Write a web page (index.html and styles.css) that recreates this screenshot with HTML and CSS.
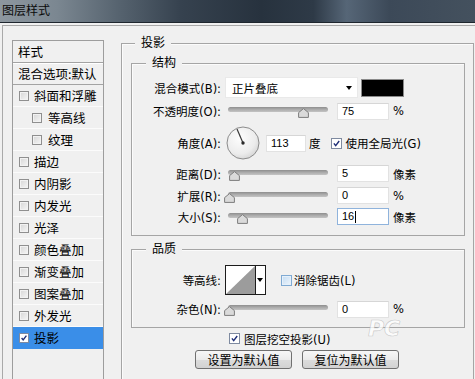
FILE: index.html
```html
<!DOCTYPE html>
<html lang="zh-CN">
<head>
<meta charset="utf-8">
<title>图层样式</title>
<link rel="stylesheet" href="styles.css">
</head>
<body>
<div class="titlebar">图层样式</div>
<div class="window">
  <div class="stylelist">
    <div class="item head">样式</div>
    <div class="item head blend">混合选项:默认</div>
    <div class="item"><span class="cb"></span><span>斜面和浮雕</span></div>
    <div class="item sub"><span class="cb"></span><span>等高线</span></div>
    <div class="item sub"><span class="cb"></span><span>纹理</span></div>
    <div class="item"><span class="cb"></span><span>描边</span></div>
    <div class="item"><span class="cb"></span><span>内阴影</span></div>
    <div class="item"><span class="cb"></span><span>内发光</span></div>
    <div class="item"><span class="cb"></span><span>光泽</span></div>
    <div class="item"><span class="cb"></span><span>颜色叠加</span></div>
    <div class="item"><span class="cb"></span><span>渐变叠加</span></div>
    <div class="item"><span class="cb"></span><span>图案叠加</span></div>
    <div class="item"><span class="cb"></span><span>外发光</span></div>
    <div class="item sel"><span class="cb on"><svg viewBox="0 0 10 10"><path d="M2 5 L4 7.5 L8 2" /></svg></span><span>投影</span></div>
  </div>

  <div class="group outer">
    <div class="legend">投影</div>

    <div class="group inner struct">
      <div class="legend inl">结构</div>

      <div class="row r1">
        <span class="lbl">混合模式(B):</span>
        <div class="select"><span>正片叠底</span><span class="arrow"></span></div>
        <span class="swatch"></span>
      </div>

      <div class="row r2">
        <span class="lbl">不透明度(O):</span>
        <div class="slider"><span class="track"></span><span class="thumb" style="left:70px"><svg viewBox="0 0 11 10"><path d="M5.5 0.6 L10.4 4.6 L10.4 9.4 L0.6 9.4 L0.6 4.6 Z"/></svg></span></div>
        <span class="num">75</span>
        <span class="unit">%</span>
      </div>

      <div class="row r3">
        <span class="lbl">角度(A):</span>
        <svg class="dial" viewBox="0 0 34 34">
          <defs>
            <radialGradient id="dg" cx="0.4" cy="0.35" r="0.7">
              <stop offset="0" stop-color="#fdfdfd"/>
              <stop offset="0.7" stop-color="#ececec"/>
              <stop offset="1" stop-color="#d4d4d4"/>
            </radialGradient>
          </defs>
          <circle cx="17" cy="17" r="16" fill="url(#dg)" stroke="#8c8c8c" stroke-width="1"/>
          <line x1="17" y1="17" x2="11" y2="3" stroke="#3a3a3a" stroke-width="1.2"/>
          <circle cx="17" cy="17" r="1.7" fill="#2a2a2a"/>
        </svg>
        <span class="num w40">113</span>
        <span class="deg">度</span>
        <span class="cb big on"><svg viewBox="0 0 11 11"><path d="M2.3 5.4 L4.5 8.2 L8.8 2.4" /></svg></span>
        <span class="cbtext">使用全局光(G)</span>
      </div>

      <div class="row r4">
        <span class="lbl">距离(D):</span>
        <div class="slider"><span class="track"></span><span class="thumb" style="left:1px"><svg viewBox="0 0 11 10"><path d="M5.5 0.6 L10.4 4.6 L10.4 9.4 L0.6 9.4 L0.6 4.6 Z"/></svg></span></div>
        <span class="num">5</span>
        <span class="unit">像素</span>
      </div>

      <div class="row r5">
        <span class="lbl">扩展(R):</span>
        <div class="slider"><span class="track"></span><span class="thumb" style="left:-4px"><svg viewBox="0 0 11 10"><path d="M5.5 0.6 L10.4 4.6 L10.4 9.4 L0.6 9.4 L0.6 4.6 Z"/></svg></span></div>
        <span class="num">0</span>
        <span class="unit">%</span>
      </div>

      <div class="row r6">
        <span class="lbl">大小(S):</span>
        <div class="slider"><span class="track"></span><span class="thumb" style="left:9px"><svg viewBox="0 0 11 10"><path d="M5.5 0.6 L10.4 4.6 L10.4 9.4 L0.6 9.4 L0.6 4.6 Z"/></svg></span></div>
        <span class="num focus">16<span class="caret"></span></span>
        <span class="unit">像素</span>
      </div>
    </div>

    <div class="group inner quality">
      <div class="legend inl">品质</div>

      <div class="row q1">
        <span class="lbl">等高线:</span>
        <div class="contour">
          <svg class="curve" viewBox="0 0 30 28" preserveAspectRatio="none"><polygon points="0,28 30,0 30,28" fill="#9c9c9c"/></svg>
          <span class="carrow"></span>
        </div>
        <span class="cb big hover"></span>
        <span class="cbtext2">消除锯齿(L)</span>
      </div>

      <div class="row q2">
        <span class="lbl">杂色(N):</span>
        <div class="slider"><span class="track"></span><span class="thumb" style="left:-4px"><svg viewBox="0 0 11 10"><path d="M5.5 0.6 L10.4 4.6 L10.4 9.4 L0.6 9.4 L0.6 4.6 Z"/></svg></span></div>
        <span class="num">0</span>
        <span class="unit">%</span>
      </div>
    </div>

    <div class="knockout">
      <span class="cb big on"><svg viewBox="0 0 11 11"><path d="M2.3 5.4 L4.5 8.2 L8.8 2.4" /></svg></span>
      <span class="cbtext">图层挖空投影(U)</span>
    </div>

    <div class="buttons">
      <button class="btn" type="button">设置为默认值</button>
      <button class="btn" type="button">复位为默认值</button>
    </div>
  </div>
</div>
<div class="watermark">PC</div>
</body>
</html>
```

FILE: styles.css
```css
* { box-sizing: border-box; }
html, body { margin: 0; padding: 0; }
body {
  width: 475px;
  height: 379px;
  overflow: hidden;
  position: relative;
  background: #f0f0f0;
  color: #000;
  font-family: "DejaVu Sans", "Noto Sans CJK SC", sans-serif;
  font-size: 11.5px;
}

.titlebar {
  height: 23px;
  padding-left: 2px;
  line-height: 20px;
  font-size: 12px;
  font-family: "Noto Sans CJK SC", sans-serif;
  color: #0a0a0a;
  background: linear-gradient(90deg, #8d979f 0%, #7b8791 12%, #56636f 25%, #36424f 38%, #27323e 55%, #2e3a47 66%, #566677 73%, #3c4958 82%, #44515e 100%);
  border-bottom: 1px solid #1e262e;
}

.window {
  display: flex;
  align-items: flex-start;
  height: 354px;
  margin: 2px 0 0 2px;
  border-top: 1px solid #a9a9a9;
  border-left: 1px solid #a9a9a9;
}

/* ---------- style list ---------- */
.stylelist {
  flex: none;
  width: 92px;
  height: 339px;
  margin: 14px 0 0 9px;
  border: 1px solid #9d9d9d;
  border-bottom: none;
  background: #f0f0f0;
  font-family: "Noto Sans CJK SC", sans-serif;
  font-size: 12.5px;
}
.item {
  height: 22px;
  display: flex;
  align-items: center;
  gap: 5px;
  padding-left: 6px;
  border-bottom: 1px solid #fbfbfb;
  white-space: nowrap;
}
.item.sub { padding-left: 19px; gap: 6px; }
.item.head {
  padding-left: 5px;
  border-bottom: 1px solid #a3a3a3;
}
.item.blend { box-shadow: inset 0 1px 0 #fff; }
.item.sel { background: #3a8ee8; border-bottom-color: #3a8ee8; }

.cb {
  flex: none;
  width: 10px;
  height: 10px;
  border: 1px solid #8f8f8f;
  background: linear-gradient(135deg, #d6d6d6, #f6f6f6);
  box-shadow: inset 0 0 0 1px #f2f2f2;
  display: inline-flex;
}
.cb.big { width: 11px; height: 11px; }
.cb.on { background: #fff; box-shadow: none; border-color: #7e8aa0; }
.cb svg { width: 100%; height: 100%; }
.cb svg path { fill: none; stroke: #1f2f78; stroke-width: 1.7; }
.cb.hover {
  border-color: #7faad3;
  background: linear-gradient(135deg, #c3dcf3, #eef5fc);
  box-shadow: inset 0 0 0 1px #e6f0fa;
}

/* ---------- group boxes ---------- */
.group {
  border: 1px solid #a5a5a5;
  box-shadow: inset 1px 1px 0 #fbfbfb;
}
.outer {
  flex: none;
  width: 353px;
  height: 336px;
  margin: 17px 0 0 17px;
  border-bottom: none;
}
.legend {
  width: fit-content;
  height: 16px;
  margin: -10px 0 0 13px;
  padding: 0 6px;
  line-height: 16px;
  background: #f0f0f0;
  font-family: "Noto Sans CJK SC", sans-serif;
  font-size: 12px;
}
.legend.inl { margin-left: 14px; }
.inner { margin: 13px 8px 0 9px; padding-bottom: 9px; }

.row { display: flex; align-items: center; white-space: nowrap; }
.lbl { flex: none; width: 89px; text-align: right; }

.r1 { margin-top: 7px; height: 21px; }
.r2 { margin-top: 3px; height: 20px; }
.r3 { margin-top: 5px; height: 34px; }
.r4 { margin-top: 4px; height: 19px; }
.r5 { margin-top: 3px; height: 19px; }
.r6 { margin-top: 2px; height: 19px; }
.q1 { margin-top: 9px; height: 30px; }
.q2 { margin-top: 5px; height: 18px; }

.select {
  flex: none;
  position: relative;
  width: 133px;
  height: 21px;
  margin-left: 4px;
  padding-left: 6px;
  display: flex;
  align-items: center;
  background: #fff;
  border: 1px solid #e9e9e9;
  font-family: "Noto Sans CJK SC", sans-serif;
}
.arrow {
  position: absolute;
  right: 5px;
  top: 8px;
  border-left: 3.5px solid transparent;
  border-right: 3.5px solid transparent;
  border-top: 4px solid #000;
}
.swatch {
  flex: none;
  width: 43px;
  height: 18px;
  margin-left: 3px;
  background: #000;
  border: 1px solid #8a8a8a;
}

.slider {
  flex: none;
  position: relative;
  width: 100px;
  height: 16px;
  margin-left: 7px;
}
.track {
  position: absolute;
  left: 0;
  right: 0;
  top: 4px;
  height: 5px;
  border-radius: 3px;
  background: linear-gradient(#8e8e8e, #acacac 50%, #c4c4c4);
}
.thumb {
  position: absolute;
  top: 5px;
  width: 11px;
  height: 10px;
  display: block;
}
.thumb svg { width: 11px; height: 10px; display: block; }
.thumb path { fill: #dadada; stroke: #7c7c7c; stroke-width: 1; }

.num {
  flex: none;
  width: 52px;
  height: 17px;
  margin-left: 9px;
  padding-left: 4px;
  background: #fff;
  border: 1px solid #e2e2e2;
  border-top-color: #d6d6d6;
  font-family: "Liberation Sans", sans-serif;
  font-size: 11px;
  line-height: 15px;
  display: flex;
  align-items: center;
}
.num.w40 { width: 40px; margin-left: 6px; }
.num.focus { border-color: #8fb3dc; }
.caret { display: inline-block; width: 1px; height: 12px; background: #000; margin-left: 1px; }
.unit { margin-left: 4px; }

.dial { flex: none; width: 34px; height: 34px; margin-left: 5px; }
.deg { margin-left: 3px; font-family: "Noto Sans CJK SC", sans-serif; }
.r3 .cb { margin-left: 10px; }
.cbtext { margin-left: 4px; }
.cbtext2 { margin-left: 2px; }

.contour {
  flex: none;
  display: flex;
  width: 41px;
  height: 30px;
  margin-left: 4px;
  border: 1px solid #1c1c1c;
  background: #fff;
}
.curve { width: 30px; height: 28px; display: block; border-right: 1px solid #1c1c1c; }
.carrow {
  flex: 1;
  position: relative;
}
.carrow::after {
  content: "";
  position: absolute;
  left: 1px;
  top: 12px;
  border-left: 3.5px solid transparent;
  border-right: 3.5px solid transparent;
  border-top: 4px solid #000;
}
.q1 .cb { margin-left: 15px; }

.knockout {
  display: flex;
  align-items: center;
  height: 13px;
  margin-top: 4px;
  padding-left: 107px;
  white-space: nowrap;
}

.buttons {
  display: flex;
  gap: 10px;
  margin-top: 5px;
  padding-left: 73px;
}
.btn {
  width: 97px;
  height: 19px;
  padding: 0;
  border: 1px solid #707070;
  border-radius: 3px;
  background: linear-gradient(#f7f7f7, #ebebeb 50%, #dcdcdc 51%, #d2d2d2);
  color: #000;
  font-family: "Noto Sans CJK SC", sans-serif;
  font-size: 12px;
  line-height: 17px;
}

.watermark {
  position: absolute;
  left: 368px;
  top: 316px;
  font-family: "DejaVu Sans", sans-serif;
  font-weight: bold;
  font-style: italic;
  font-size: 22px;
  color: rgba(255, 255, 255, 0.75);
  -webkit-text-stroke: 0.6px rgba(160, 160, 160, 0.55);
  pointer-events: none;
}
```
